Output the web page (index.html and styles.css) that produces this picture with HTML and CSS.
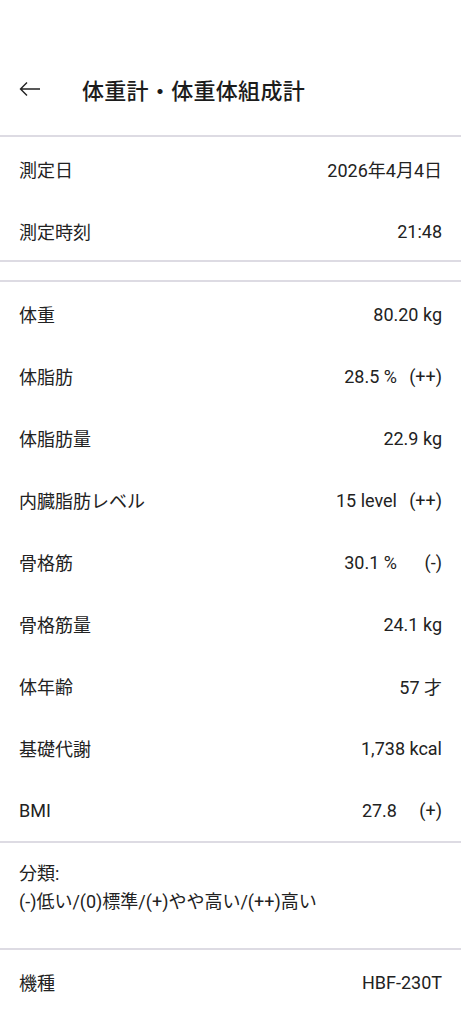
FILE: index.html
```html
<!DOCTYPE html>
<html lang="ja">
<head>
    <meta charset="utf-8">
    <title>体重計・体重体組成計</title>
    <link rel="stylesheet" href="styles.css">
</head>
<body>
    <header class="app-bar">
        <span class="back-icon">
            <svg width="22" height="16" viewBox="0 0 22 16">
                <path d="M21 8H2M8 1.5L1.5 8L8 14.5" fill="none" stroke="#222" stroke-width="1.4"/>
            </svg>
        </span>
        <h1 class="title">体重計・体重体組成計</h1>
    </header>

    <section class="section">
        <div class="row"><span class="label">測定日</span><span class="value">2026年4月4日</span></div>
        <div class="row"><span class="label">測定時刻</span><span class="value">21:48</span></div>
    </section>

    <div class="spacer"></div>

    <section class="section section-body">
        <div class="row"><span class="label">体重</span><span class="value">80.20 kg</span></div>
        <div class="row"><span class="label">体脂肪</span><span class="value">28.5 %</span><span class="tag">(++)</span></div>
        <div class="row"><span class="label">体脂肪量</span><span class="value">22.9 kg</span></div>
        <div class="row"><span class="label">内臓脂肪レベル</span><span class="value">15 level</span><span class="tag">(++)</span></div>
        <div class="row"><span class="label">骨格筋</span><span class="value">30.1 %</span><span class="tag">(-)</span></div>
        <div class="row"><span class="label">骨格筋量</span><span class="value">24.1 kg</span></div>
        <div class="row"><span class="label">体年齢</span><span class="value">57 才</span></div>
        <div class="row"><span class="label">基礎代謝</span><span class="value">1,738 kcal</span></div>
        <div class="row"><span class="label">BMI</span><span class="value">27.8</span><span class="tag">(+)</span></div>
    </section>

    <section class="section note">
        <p>分類:</p>
        <p>(-)低い/(0)標準/(+)やや高い/(++)高い</p>
    </section>

    <section class="section">
        <div class="row"><span class="label">機種</span><span class="value">HBF-230T</span></div>
    </section>
</body>
</html>
```

FILE: styles.css
```css
body {
    margin: 0;
    background-color: #fff;
    color: #222;
    font-family: Roboto, "Noto Sans CJK JP", sans-serif;
    font-size: 18px;
}

.app-bar {
    height: 135px;
    display: flex;
    align-items: center;
    padding: 42px 0 0 19px;
    box-sizing: border-box;
}

.back-icon {
    display: flex;
    width: 63px;
}

.title {
    margin: 0;
    font-size: 22px;
    font-weight: 500;
    color: #1c1c1c;
    letter-spacing: 0.3px;
}

.section {
    border-top: 2px solid #dddbe3;
    padding: 3px 19px 0 19px;
    display: flex;
    flex-direction: column;
    gap: 4px;
}

.section-body {
    padding-bottom: 2px;
}

.spacer {
    border-top: 2px solid #dddbe3;
    height: 18px;
}

.row {
    height: 58px;
    display: flex;
    align-items: center;
}

.label {
    flex: 1;
}

.tag {
    width: 45px;
    text-align: right;
}

.note {
    padding-top: 17px;
    padding-bottom: 32px;
    gap: 0;
}

.note p {
    margin: 0;
    line-height: 28px;
}
```
